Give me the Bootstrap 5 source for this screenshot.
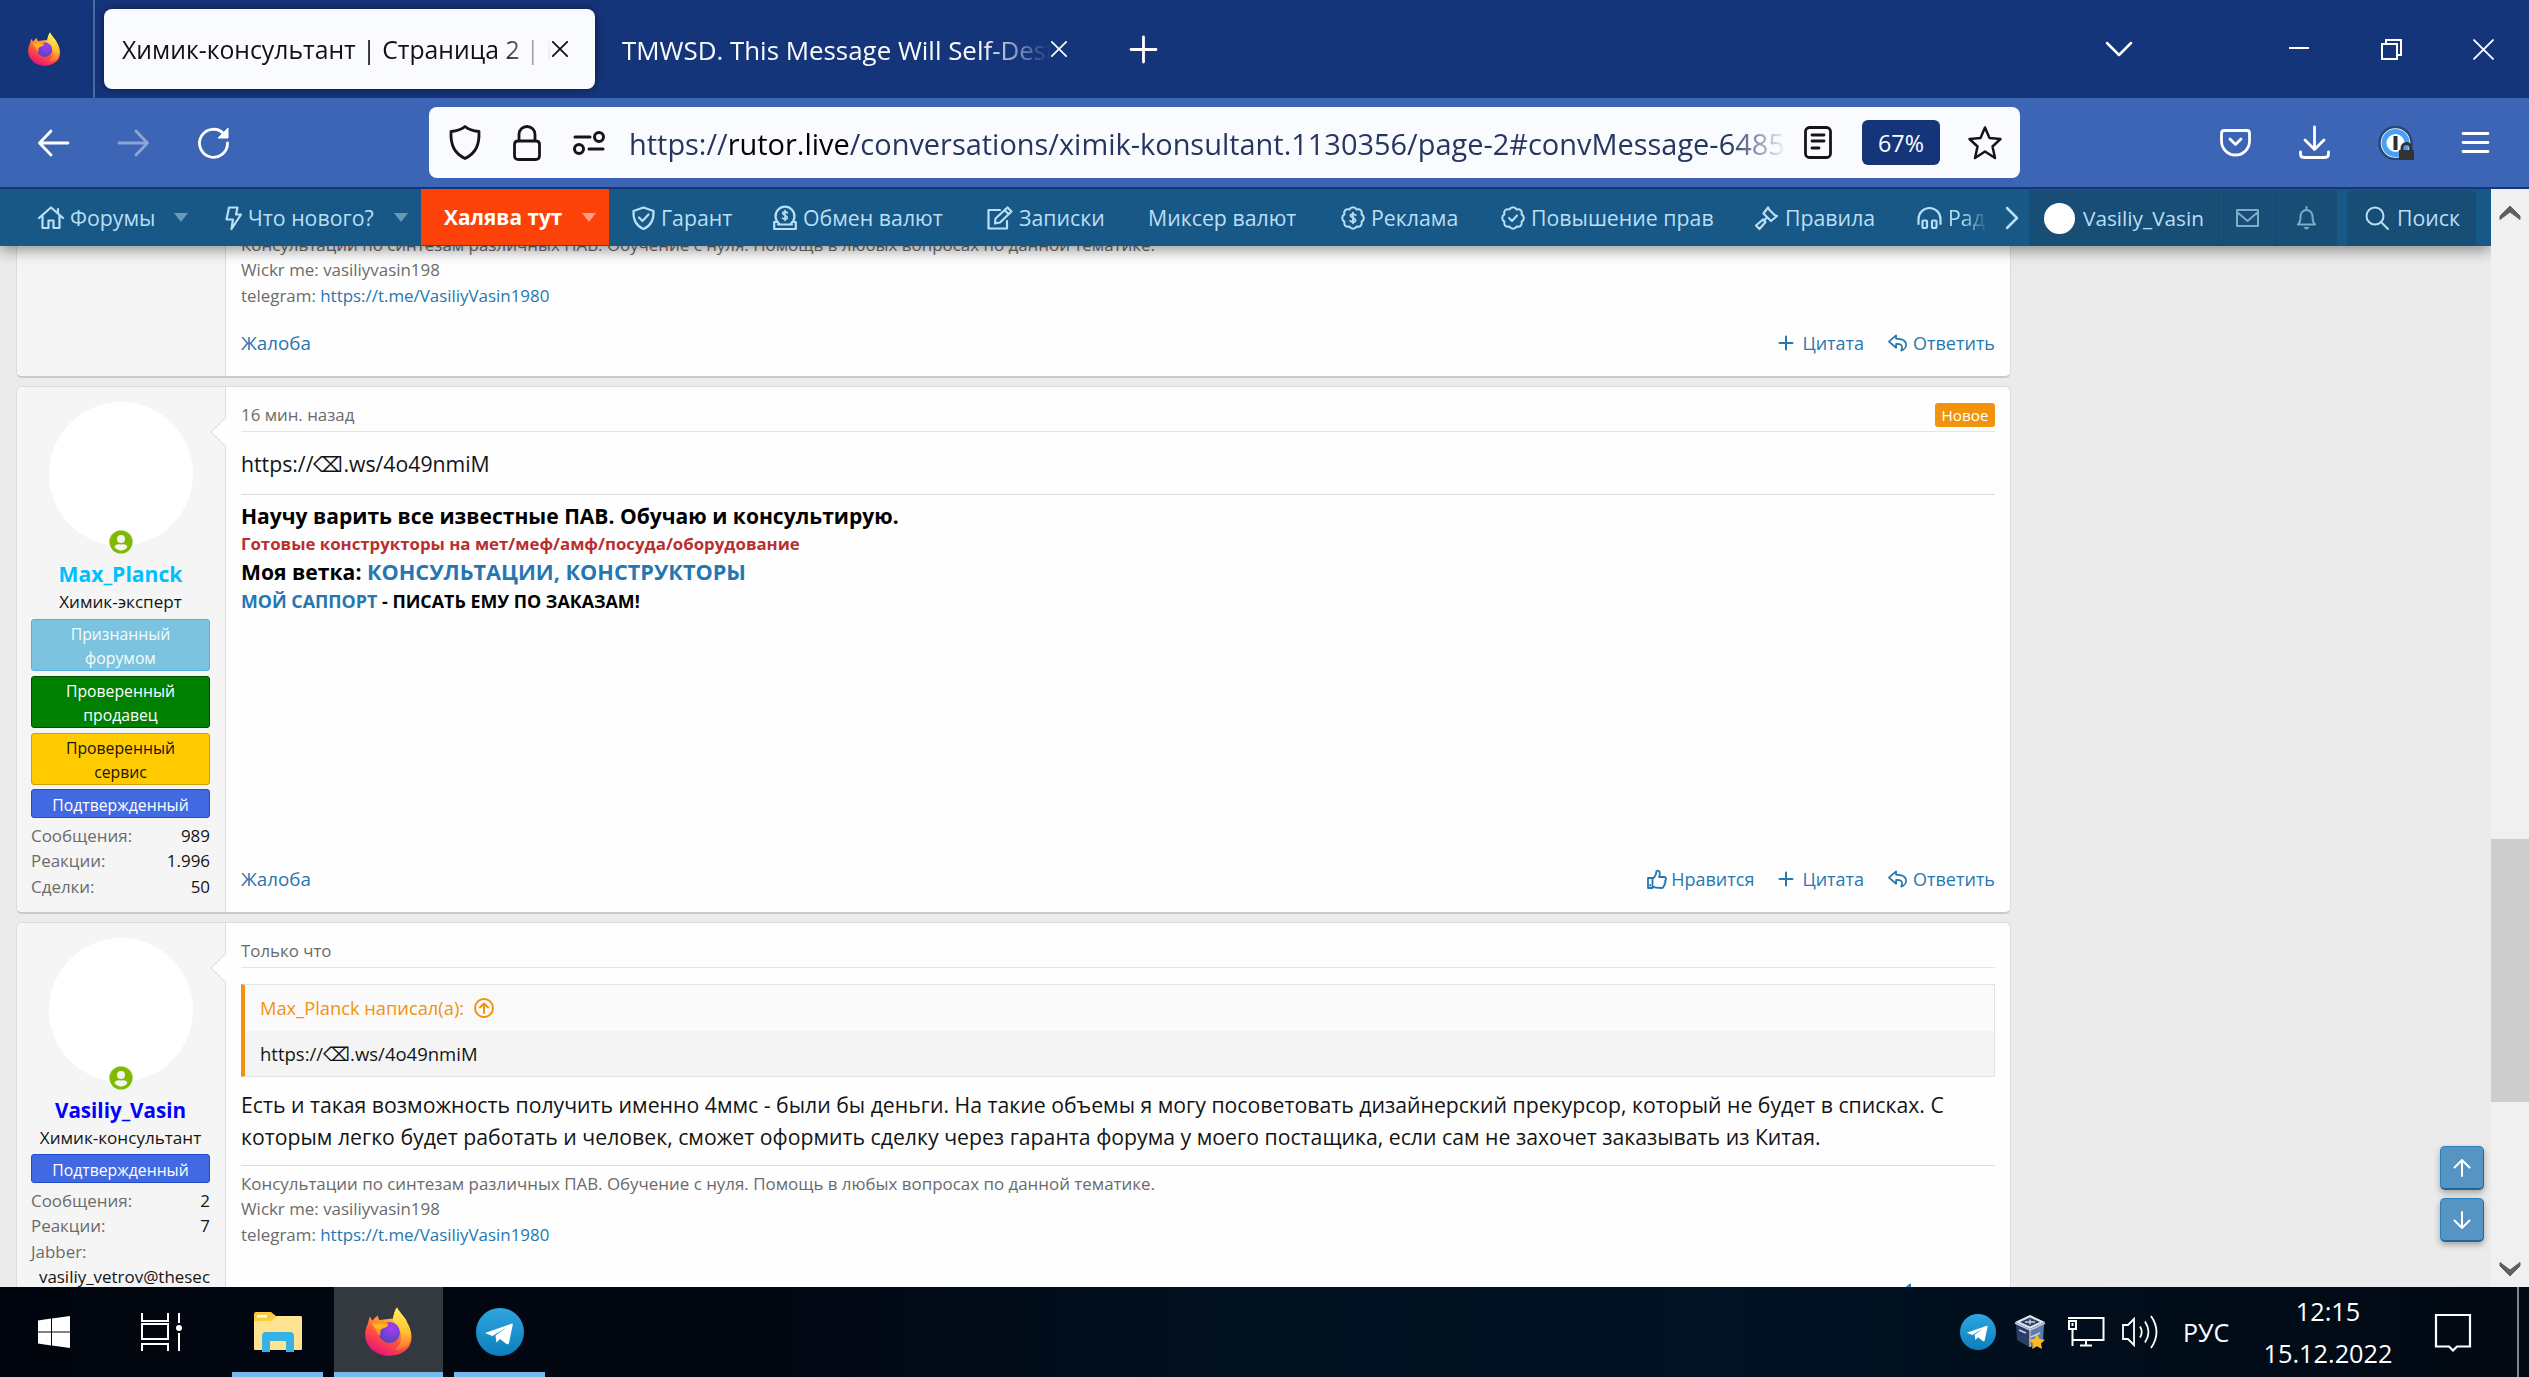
<!DOCTYPE html>
<html lang="ru">
<head>
<meta charset="utf-8">
<title>Химик-консультант | Страница 2</title>
<link href="https://cdn.jsdelivr.net/npm/bootstrap@5.3.0/dist/css/bootstrap.min.css" rel="stylesheet">
<style>
body{font-family:"Open Sans","Noto Sans",sans-serif;font-size:21.24px;line-height:32px;color:#141414;background:#ebebeb;height:1377px;width:2529px;overflow:hidden}
svg{display:block;flex:none;overflow:visible}
.ln{fill:none;stroke:currentColor;stroke-linecap:round;stroke-linejoin:round}
a{color:#2577b1;text-decoration:none}
.nw{white-space:nowrap}
/* tab strip */
.tabstrip{height:98px;background:#15357b;color:#fff;font-size:25.2px}
.fxview{width:95px;height:98px;border-right:2px solid #4d66a0;padding-left:28px}
.tab-on{width:491px;height:80px;margin-left:9px;border-radius:8px;background:#fafbff;color:#111;padding:0 26px 0 18px;box-shadow:0 0 8px rgba(0,0,0,.5)}
.tab-off{width:476px;height:80px;padding-left:27px;color:#fbfbfe;font-size:25.9px}
.tab-cap{width:429px;padding-top:2px;flex:none;overflow:hidden;white-space:nowrap;-webkit-mask-image:linear-gradient(90deg,#000 84%,transparent);mask-image:linear-gradient(90deg,#000 84%,transparent)}
.tab-on .tab-cap{width:430px;font-size:24.75px;-webkit-mask-image:linear-gradient(90deg,#000 88%,transparent);mask-image:linear-gradient(90deg,#000 88%,transparent)}
.m-plus{margin-left:59px}
.winbtns{padding-right:35px}
.g-a{margin-right:157px}.g-b{margin-right:72px}.g-c{margin-right:71px}
/* toolbar */
.toolbar{height:91px;background:#3d65b5;color:#fff;border-bottom:2px solid #15357b;padding-left:38px}
.tb-left{gap:49px;width:391px}
.urlbox{width:1591px;height:71px;border-radius:8px;background:#fafbff;color:#15141a;padding:0 18px 0 20px}
.i-lock{margin-left:32px}.i-perm{margin-left:32px}
.urltext{font-size:28.95px;width:1158px;margin-left:24px;padding-top:2px;overflow:hidden;white-space:nowrap;color:#26365f;line-height:50px;-webkit-mask-image:linear-gradient(90deg,#000 95%,transparent);mask-image:linear-gradient(90deg,#000 95%,transparent)}
.urltext b{font-weight:400;color:#000}
.zoomlvl{width:78px;height:45px;border-radius:6px;background:#15357b;color:#fff;font-size:23.3px;margin:0 28px 0 30px}
.tb-right{margin-left:200px}
/* site nav */
.sitenav{height:57px;background:#185886;color:#b9dff6;font-size:21.3px;z-index:3;position:relative;box-shadow:0 4px 14px rgba(0,0,0,.42)}
.sitenav .nav-item{white-space:nowrap;height:57px;display:flex;align-items:center;flex:none}
.n1{width:187px;margin-left:38px}.n2{width:196px}.n3{width:141px;margin-left:23px}.n4{width:214px}.n5{width:161px}.n6{width:193px}.n7{width:160px}.n8{width:254px}.n9{width:162px}.n10{width:88px}
.n1 .tri{margin-right:37px}.n2 .tri{margin-right:13px}.hot .tri{margin-right:13px}
.ic{width:26px;height:26px}.i6{margin-right:6px}
.tri{width:0;height:0;border:7px solid transparent;border-top:9px solid #6799b9;border-bottom:0;margin-left:auto}
.hot{background:#fc4209;color:#fff;font-weight:700;font-size:20.85px;width:188px;padding-left:23px;height:56px!important;align-self:flex-start}
.hot .tri{border-top-color:#fd9e80}
.fadeout{width:40px;overflow:hidden;-webkit-mask-image:linear-gradient(90deg,#000 35%,transparent);mask-image:linear-gradient(90deg,#000 35%,transparent)}
.dark-cell{background:#184d76;height:56px;margin-top:1px}
.dim{color:#7eabc8}
.ava-s{width:31px;height:31px;border-radius:50%;background:#fff}
.u1{width:190px;padding-left:15px;margin-left:10px;border-right:1px solid #16466b}.u2{width:57px;border-right:1px solid #16466b}.u3{width:61px}.u4{width:129px;margin-left:10px;padding-left:18px;border-radius:6px 6px 0 0}
.u-nick{font-size:20.8px}
/* page */
.pagearea{width:2491px}
.postlist{padding-left:16px;width:2011px;gap:8px}
.post{border:1px solid #dcdcdc;border-bottom:2px solid #cacaca;border-radius:6px;background:#fefefe;flex:none}
.p1{height:152px;margin-top:-20px}.p2{height:528px}.p3{height:560px}
.usercell{width:209px;flex:none;background:#f5f5f5;border-right:1px solid #dcdcdc;padding:15px 15px 15px 14px;border-radius:6px 0 0 6px;position:relative}
.notch::after{content:"";position:absolute;right:-12px;top:34px;width:22px;height:22px;background:#fefefe;border:solid #dcdcdc;border-width:0 0 1.5px 1.5px;transform:rotate(45deg)}
.ava{width:144px;height:144px;border-radius:50%;background:#fff;position:relative;margin:0 auto}
.online{position:absolute;left:59px;bottom:-9px}
.uname{font-weight:700;font-size:21.15px;line-height:30px;margin-top:13px}
.c-planck{color:#00bfff}.c-vasin{color:#00f;font-size:20.6px}
.utitle{font-size:17.1px;line-height:26px;margin-bottom:4px}
.ubanner{font-size:15.75px;line-height:24px;border:1px solid;border-radius:3px;padding:2px 24px 0;text-align:center;margin-bottom:5px}
.ub1{background:#7cc3e0;border-color:#57addb;color:#f6fbfd}
.ub2{background:#008000;border-color:#004d00;color:#fff}
.ub3{background:#ffcb00;border-color:#cca300;color:#141414}
.ub4{background:#4169e1;border-color:#214cce;color:#fff;padding:3px 0 0;margin-top:-1px}
.ustats{font-size:16.95px;line-height:25.4px}
.ustats span{color:#6b6b6b}
.cell{padding:0 15px 0 15px}
.phead{height:45px;padding-top:15px;font-size:16.85px;line-height:26px;color:#6b6b6b;border-bottom:1px solid #e3e3e3;margin-bottom:16px}
.newtag{background:#f2930d;color:#fff;font-size:15.3px;border-radius:3px;width:60px;height:24px;line-height:25px;margin-top:1px}
.sig{border-top:1px solid #dcdcdc}
.sig-s{font-size:16.92px;line-height:25.4px;color:#6b6b6b;padding-top:5px}
.sig-b{font-weight:700;color:#000;line-height:28.2px;margin-top:14px;padding-top:7px}
.p3 .sig-s{margin-top:12px}
.s1{font-size:21.06px}.s2{font-size:16.82px;color:#b92f2f}.s3{font-size:21.15px}.s3 a{font-size:21.7px}.s4{font-size:17.85px}
.pfoot{font-size:18px;line-height:26px;color:#2577b1;padding-bottom:4px}
.report{font-size:18.8px}
.p3 .pfoot{margin-top:36px}
.quote{border:1px solid #e3e3e3;border-left:4px solid #f2930d;height:93px;margin-bottom:12px}
.q-h{background:#fafafa;color:#f2930d;height:46px;font-size:18.3px;padding-left:15px;gap:10px}
.q-b{background:#f4f4f4;height:45px;font-size:18.5px;padding-left:15px}
.sbar{width:38px;background:#f0f0f0;padding:17px 0 11px}
.sthumb{background:#cdcdcd;height:263px;width:38px;margin-top:620px}
.jump{position:absolute;left:2440px;top:1146px;z-index:4}
.jbtn{width:44px;height:44px;border-radius:5px;background:#5694c3;border:1px solid #2a80bd;border-right-color:#20679a;border-bottom:2px solid #20679a;color:#fff;box-shadow:0 3px 6px rgba(0,0,0,.3);margin-bottom:8px}
/* taskbar */
.taskbar{height:90px;background:linear-gradient(90deg,#01050e 0,#020712 30%,#01101f 48%,#001223 68%,#010d1b 84%,#020912);color:#fff;z-index:5;position:relative}
.tkb{height:90px;width:91px;border-bottom:5px solid #76b9ed;padding-top:4px}
.tkb.act{width:109px;background:#343940;margin:0 11px}
.clock{width:140px;font-size:25.3px;line-height:42px;margin-left:29px}
.lang{font-size:25px;margin-left:25px;width:46px}
.k1{margin-left:38px}.k2{margin-left:71px}.k3{margin-left:50px}.t1{margin-left:1415px}.t2{margin-left:19px}.t3{margin-left:23px}.t4{margin-left:17px}.t5{margin-left:37px}.t6{margin-left:46px;width:2px;height:90px;background:#7e858e}
</style>
<script src="https://cdn.jsdelivr.net/npm/bootstrap@5.3.0/dist/js/bootstrap.bundle.min.js"></script>
</head>
<body class="d-flex flex-column m-0">
<svg width="0" height="0" class="position-absolute">
<defs>
<linearGradient id="fa" x1=".8" y1="0" x2=".3" y2="1"><stop offset="0" stop-color="#fff44f"/><stop offset=".35" stop-color="#ffa930"/><stop offset=".65" stop-color="#ff4f3e"/><stop offset="1" stop-color="#e60f7e"/></linearGradient>
<linearGradient id="fb" x1=".5" y1="0" x2=".5" y2="1"><stop offset="0" stop-color="#fff261"/><stop offset=".6" stop-color="#ffc02e"/><stop offset="1" stop-color="#ff6a3a"/></linearGradient>
<radialGradient id="fc" cx=".6" cy=".3" r=".8"><stop offset="0" stop-color="#a63df5"/><stop offset="1" stop-color="#4a45b8"/></radialGradient>
<linearGradient id="tg" x1="0" y1="0" x2="0" y2="1"><stop offset="0" stop-color="#2fa6e0"/><stop offset="1" stop-color="#0b7fbd"/></linearGradient>
<symbol id="firefox" viewBox="0 0 48 48">
<path d="M5 9c1 2 1.500 3 2.500 4C9 11 11 9.500 13 8c0 2 .5 3.500 1.500 4.500L28 11C29 6 30 2.500 32 0c2 5 8 9 10 15 6 10 7 22-3 29-9 6-22 6-31-1C-2 34-1 23 3 16c.5-3 1-5 2-7z" fill="url(#fa)"/>
<path d="M28 11C29 6 30 2.500 32 0c2 5 8 9 10 15 5 8 5 17 0 23-3 3-8 5-12 4 6-4 8-12 5-19-2-4-6-6-7-12z" fill="url(#fb)"/>
<circle cx="24.500" cy="25" r="10.500" fill="url(#fc)"/>
<path d="M14.500 12.500c3 0 7 1.500 9 4.500-1.500 3-4 3.500-7 4.500-1 2-2 4-1 7-3-2-5-5-5-9 0-3 2-5 4-7z" fill="#ff9a1f"/>
<path d="M7 15c3 2 9 1 16 3-3 2-6 2-8 4l-5-1z" fill="#ffb52a"/>
</symbol>
<symbol id="telegram" viewBox="0 0 48 48"><circle cx="24" cy="24" r="24" fill="url(#tg)"/><path d="M9 25 36 15.500q1 0 .8 1L33 35q-.8 2-2.500.9L24 31l-3.500 3.500-1-7L31 19 16.500 28z" fill="#fff"/></symbol>
<symbol id="x" viewBox="0 0 20 20"><path class="ln" stroke-linecap="butt" d="M1 1 19 19M19 1 1 19"/></symbol>
<symbol id="plus" viewBox="0 0 16 16"><path class="ln" stroke-width="2" d="M8 1.500v13M1.500 8h13"/></symbol>
<symbol id="reply" viewBox="0 0 22 18"><path class="ln" stroke-width="1.800" d="M8.500 1 1 7.500 8.500 14v-4c5 0 7.500 1 5.500 7 6-2 9-12-5.500-12.500z"/></symbol>
<symbol id="like" viewBox="0 0 20 20"><path class="ln" stroke-width="1.800" d="M1 9h4.500v10H1zM5.500 10c2-2 4-3.500 4-8 3.500-1.500 4 2.500 2.500 6h5c2.500 0 2.500 3 1 3.500 1 1 .5 2.500-.5 3 .5 1.200 0 2.200-1 2.500.2 1.500-.5 2-2 2-4 0-6 0-9-1.500M3.200 16v.5"/></symbol>
<symbol id="online" viewBox="0 0 26 26"><circle cx="13" cy="13" r="13" fill="#f5f5f5"/><circle cx="13" cy="13" r="11.500" fill="#7fb900"/><circle cx="13" cy="10" r="4" fill="#f5f5f5"/><path d="M6.500 18c1-3 3.500-3 6.500-2.500 3-.5 5.500-.5 6.500 2.500-3 4.500-10 4.500-13 0z" fill="#f5f5f5"/></symbol>
<symbol id="rosette" viewBox="0 0 24 24"><path class="ln" stroke-width="2" d="M12 1.200q2.400 0 3.600 2.200 2.700-.6 4.200.8t.8 4.200q2.200 1.200 2.200 3.600t-2.200 3.600q.7 2.800-.8 4.200t-4.200.8q-1.200 2.200-3.600 2.200t-3.600-2.200q-2.700.6-4.200-.8t-.8-4.200Q1.200 14.400 1.200 12t2.200-3.600q-.7-2.800.8-4.200t4.200-.8Q9.600 1.200 12 1.200z"/></symbol>
<symbol id="dollar" viewBox="0 0 8 14"><path class="ln" stroke-width="1.900" d="M7 4C6 2.500 1.500 2 1.300 4.500 1.300 7 6.800 6.500 6.800 9.500 6.500 12 2 11.500 1 10M4 1v12"/></symbol>
</defs></svg>

<header class="tabstrip d-flex align-items-center flex-shrink-0">
  <div class="fxview d-flex align-items-center"><svg width="33" height="34"><use href="#firefox"/></svg></div>
  <div class="tab-on d-flex align-items-center"><div class="tab-cap">Химик-консультант | Страница 2 | R</div><svg width="16" height="16" stroke-width="2.200"><use href="#x"/></svg></div>
  <div class="tab-off d-flex align-items-center"><div class="tab-cap">TMWSD. This Message Will Self-Dest</div><svg width="16" height="16" stroke-width="2.200"><use href="#x"/></svg></div>
  <svg class="m-plus" width="27" height="27" viewBox="0 0 27 27"><path class="ln" stroke-width="2.800" d="M13.500 1v25M1 13.500h25"/></svg>
  <div class="winbtns d-flex align-items-center ms-auto">
    <svg class="g-a" width="26" height="14" viewBox="0 0 26 14"><path class="ln" stroke-width="2.500" d="M1 1l12 12L25 1"/></svg>
    <svg class="g-b" width="20" height="20" viewBox="0 0 20 20"><path d="M0 8h20v2H0z" fill="#fff"/></svg>
    <svg class="g-c" width="21" height="21" viewBox="0 0 21 21"><path fill="none" stroke="#fff" stroke-width="2" d="M1 5h15v15H1zM5 5V1h15v15h-4"/></svg>
    <svg width="21" height="21" stroke-width="1.800"><use href="#x"/></svg>
  </div>
</header>

<div class="toolbar d-flex align-items-center flex-shrink-0">
  <div class="tb-left d-flex align-items-center">
    <svg width="31" height="26" viewBox="0 0 31 26"><path class="ln" stroke-width="2.800" d="M13 1 1.500 13 13 25M2 13h28"/></svg>
    <svg width="31" height="26" viewBox="0 0 31 26" opacity=".42"><path class="ln" stroke-width="2.800" d="M18 1l11.500 12L18 25M29 13H1"/></svg>
    <svg width="31" height="31" viewBox="0 0 31 31"><path class="ln" stroke-width="2.800" d="M26 7A14 14 0 1 0 29.500 16"/><path fill="#fff" d="M30 1v10H20z" stroke="#fff" stroke-linejoin="round"/></svg>
  </div>
  <div class="urlbox d-flex align-items-center">
    <svg width="32" height="35" viewBox="0 0 32 35"><path class="ln" stroke-width="2.800" d="M16 1.500C12 5 7 6 2 6.500 1.500 20 5 28 16 33.500 27 28 30.500 20 30 6.500 25 6 20 5 16 1.500z"/></svg>
    <svg class="i-lock" width="28" height="36" viewBox="0 0 28 36"><path class="ln" stroke-width="2.800" d="M5 16h18q3.500 0 3.500 3.500v11q0 4-4 4h-17q-4 0-4-4v-11Q1.500 16 5 16zM6 16v-6.500a8 8 0 0 1 16 0V16"/></svg>
    <svg class="i-perm" width="32" height="24" viewBox="0 0 32 24"><path class="ln" stroke-width="3" d="M2 6h15M16 18h14"/><circle class="ln" stroke-width="3" cx="26" cy="6" r="4.500"/><circle class="ln" stroke-width="3" cx="6" cy="18" r="4.500"/></svg>
    <div class="urltext">https://<b>rutor.live</b>/conversations/ximik-konsultant.1130356/page-2#convMessage-6485</div>
    <svg class="ms-auto" width="28" height="33" viewBox="0 0 28 33"><rect class="ln" stroke-width="2.800" x="1.500" y="1.500" width="25" height="30" rx="4"/><path class="ln" stroke-width="2.800" d="M8 9h12M8 15h12M8 22h7"/></svg>
    <div class="zoomlvl d-flex align-items-center justify-content-center">67%</div>
    <svg width="34" height="34" viewBox="0 0 34 34"><path class="ln" stroke-width="2.500" d="M17 1.500l4.500 10.500 11 1-8 7.500 2.500 11.500-10-6.500L7 32l2.500-11.500-8-7.500 11-1z"/></svg>
  </div>
  <div class="tb-right d-flex align-items-center">
    <svg width="31" height="28" viewBox="0 0 31 28"><path class="ln" stroke-width="2.800" d="M4 1.500h23q2.500 0 2.500 3V12a14 14 0 0 1-28 0V4.500q0-3 2.500-3zM10 10l5.500 5.500L21 10"/></svg>
    <svg class="ms-5" width="31" height="33" viewBox="0 0 31 33"><path class="ln" stroke-width="2.800" d="M15.500 1v22M6 14l9.500 9.500L25 14M1.500 26v2q0 3.500 3.500 3.500h21q3.500 0 3.500-3.500v-2"/></svg>
    <svg class="ms-5" width="36" height="36" viewBox="0 0 36 36"><circle cx="17.500" cy="18" r="16" fill="#fff" stroke="#274777" stroke-width="2.500"/><circle cx="17.500" cy="18" r="11.500" fill="none" stroke="#4aa0f5" stroke-width="5"/><path d="M15.500 11h4v14h-4z" fill="#2c2f3b"/><path d="M21 25h15v10H21z" fill="#333"/><path fill="none" stroke="#333" stroke-width="3" d="M24 26v-3a4.500 4.500 0 0 1 9 0v3"/></svg>
    <svg class="ms-5" width="27" height="21" viewBox="0 0 27 21"><path class="ln" stroke-width="2.800" d="M1 1.500h25M1 10.500h25M1 19.500h25"/></svg>
  </div>
</div>

<div class="d-flex flex-grow-1 overflow-hidden">
 <div class="pagearea d-flex flex-column overflow-hidden">
  <nav class="sitenav d-flex align-items-center flex-shrink-0">
    <div class="nav-item n1"><svg class="ic i6" viewBox="0 0 26 24"><path class="ln" stroke-width="2.200" d="M1 12 13 1.500 25 12M4.500 9.500V22h6v-7.500h5V22h6V9.500M20 7V3"/></svg>Форумы<i class="tri"></i></div>
    <div class="nav-item n2"><svg class="i6" width="17" height="24" viewBox="0 0 17 24"><path class="ln" stroke-width="2.200" d="M4 1.500h8.500L11 8.500h5L6.500 23 8 13.500H1.500z"/></svg>Что нового?<i class="tri"></i></div>
    <div class="nav-item hot">Халява тут<i class="tri"></i></div>
    <div class="nav-item n3"><svg class="i6" width="23" height="24" viewBox="0 0 23 24"><path class="ln" stroke-width="2.200" d="M11.500 1.500 21.500 5c.5 8-2 14.500-10 18-8-3.500-10.500-10-10-18zM7 11.500l3.500 3.500L16.500 8.500"/></svg>Гарант</div>
    <div class="nav-item n4"><svg class="i6" width="24" height="24" viewBox="0 0 24 24"><path class="ln" stroke-width="2.200" d="M6 17.500a9.500 9.500 0 1 1 12 0M4 16H1.200v7h21.600v-7H20M5 18.500h14"/><use href="#dollar" x="8.500" y="3.500" width="7" height="12"/></svg>Обмен валют</div>
    <div class="nav-item n5"><svg class="i6" width="26" height="24" viewBox="0 0 26 24"><path class="ln" stroke-width="2.200" d="M13 4H1.500v18.500H20V15M8.500 12.500 20.500 1.500 24.500 5.500 13 16.500l-5 1zM17.500 4l4 4"/></svg>Записки</div>
    <div class="nav-item n6">Миксер валют</div>
    <div class="nav-item n7"><svg class="i6" width="24" height="24"><use href="#rosette"/><use href="#dollar" x="8" y="5.500" width="8" height="13"/></svg>Реклама</div>
    <div class="nav-item n8"><svg class="i6" width="24" height="24" viewBox="0 0 24 24"><use href="#rosette"/><path class="ln" stroke-width="2" d="M8 12l3 3 5-5.500"/></svg>Повышение прав</div>
    <div class="nav-item n9"><svg class="i6" width="24" height="24" viewBox="0 0 24 24"><path class="ln" stroke-width="2.200" d="M13 1.500l-4.500 6L16 15l6-5-2.500-1-5-5zM12 11.500l-2.500 2.500M8 13.500l2.500 2.500-6 7-3.500-3.500z"/></svg>Правила</div>
    <div class="nav-item n10"><svg class="i6" width="25" height="24" viewBox="0 0 25 24"><path class="ln" stroke-width="2.200" d="M1.500 18v-5a11 11 0 0 1 22 0v5"/><rect class="ln" stroke-width="2.200" x="5.500" y="14.500" width="4.500" height="7.500" rx="1"/><rect class="ln" stroke-width="2.200" x="15" y="14.500" width="4.500" height="7.500" rx="1"/></svg><span class="fadeout">Ради</span></div>
    <svg width="14" height="22" viewBox="0 0 14 22"><path class="ln" stroke-width="2.500" d="M2 1l10 10L2 21"/></svg>
    <div class="dark-cell u1 d-flex align-items-center flex-shrink-0"><i class="ava-s me-2 flex-shrink-0"></i><span class="nw u-nick">Vasiliy_Vasin</span></div>
    <div class="dark-cell u2 dim d-flex align-items-center justify-content-center flex-shrink-0"><svg width="23" height="18" viewBox="0 0 23 18"><path class="ln" stroke-width="2" d="M1 1h21v16H1zM1 3l10.500 9L22 3"/></svg></div>
    <div class="dark-cell u3 dim d-flex align-items-center justify-content-center flex-shrink-0"><svg width="21" height="24" viewBox="0 0 21 24"><path class="ln" stroke-width="2" d="M10.500 1v2M2 18.500h17c-2-2-2.500-4-2.500-8a6 6.500 0 0 0-12 0c0 4-.5 6-2.500 8z"/><path fill="currentColor" d="M7.500 21h6q-3 5-6 0z"/></svg></div>
    <div class="dark-cell u4 d-flex align-items-center flex-shrink-0"><svg width="24" height="24" viewBox="0 0 24 24" class="me-2"><circle class="ln" stroke-width="2" cx="10" cy="10" r="8.500"/><path class="ln" stroke-width="2" d="M16 16l7 7"/></svg>Поиск</div>
  </nav>

  <main class="postlist d-flex flex-column">
    <article class="post p1 d-flex">
      <div class="usercell"></div>
      <div class="cell flex-grow-1 d-flex flex-column">
        <div class="sig-s">Консультации по синтезам различных ПАВ. Обучение с нуля. Помощь в любых вопросах по данной тематике.<br>Wickr me: vasiliyvasin198<br>telegram: <a href="#">https://t.me/VasiliyVasin1980</a></div>
        <div class="pfoot d-flex align-items-center mt-auto mb-3"><span class="me-auto report">Жалоба</span>
          <svg width="16" height="16" class="me-2"><use href="#plus"/></svg><span class="me-4">Цитата</span><svg width="21" height="18" class="me-1"><use href="#reply"/></svg><span>Ответить</span></div>
      </div>
    </article>

    <article class="post p2 d-flex">
      <div class="usercell notch text-center">
        <div class="ava"><svg class="online" width="26" height="26"><use href="#online"/></svg></div>
        <div class="uname c-planck">Max_Planck</div>
        <div class="utitle">Химик-эксперт</div>
        <div class="ubanner ub1">Признанный форумом</div>
        <div class="ubanner ub2">Проверенный продавец</div>
        <div class="ubanner ub3">Проверенный сервис</div>
        <div class="ubanner ub4">Подтвержденный</div>
        <div class="ustats">
          <div class="d-flex justify-content-between"><span>Сообщения:</span>989</div>
          <div class="d-flex justify-content-between"><span>Реакции:</span>1.996</div>
          <div class="d-flex justify-content-between"><span>Сделки:</span>50</div>
        </div>
      </div>
      <div class="cell flex-grow-1 d-flex flex-column">
        <div class="phead d-flex justify-content-between"><span>16 мин. назад</span><span class="newtag text-center">Новое</span></div>
        <div>https://⌫.ws/4o49nmiM</div>
        <div class="sig sig-b">
          <div class="s1">Научу варить все известные ПАВ. Обучаю и консультирую.</div>
          <div class="s2">Готовые конструкторы на мет/меф/амф/посуда/оборудование</div>
          <div class="s3">Моя ветка: <a href="#">КОНСУЛЬТАЦИИ, КОНСТРУКТОРЫ</a></div>
          <div class="s4"><a href="#">МОЙ САППОРТ</a> - ПИСАТЬ ЕМУ ПО ЗАКАЗАМ!</div>
        </div>
        <div class="pfoot d-flex align-items-center mt-auto mb-3"><span class="me-auto report">Жалоба</span>
          <svg width="20" height="20" class="me-1"><use href="#like"/></svg><span class="me-4">Нравится</span><svg width="16" height="16" class="me-2"><use href="#plus"/></svg><span class="me-4">Цитата</span><svg width="21" height="18" class="me-1"><use href="#reply"/></svg><span>Ответить</span></div>
      </div>
    </article>

    <article class="post p3 d-flex">
      <div class="usercell notch text-center">
        <div class="ava"><svg class="online" width="26" height="26"><use href="#online"/></svg></div>
        <div class="uname c-vasin">Vasiliy_Vasin</div>
        <div class="utitle">Химик-консультант</div>
        <div class="ubanner ub4">Подтвержденный</div>
        <div class="ustats">
          <div class="d-flex justify-content-between"><span>Сообщения:</span>2</div>
          <div class="d-flex justify-content-between"><span>Реакции:</span>7</div>
          <div class="text-start"><span>Jabber:</span></div>
          <div class="text-end">vasiliy_vetrov@thesec</div>
        </div>
      </div>
      <div class="cell flex-grow-1 d-flex flex-column">
        <div class="phead"><span>Только что</span></div>
        <div class="quote">
          <div class="q-h d-flex align-items-center">Max_Planck написал(а):<svg width="20" height="20" viewBox="0 0 20 20"><circle class="ln" stroke-width="2" cx="10" cy="10" r="9"/><path class="ln" stroke-width="2" d="M10 15V6M6 9.500 10 5.500l4 4"/></svg></div>
          <div class="q-b d-flex align-items-center">https://⌫.ws/4o49nmiM</div>
        </div>
        <div class="nw">Есть и такая возможность получить именно 4ммс - были бы деньги. На такие объемы я могу посоветовать дизайнерский прекурсор, который не будет в списках. С<br>которым легко будет работать и человек, сможет оформить сделку через гаранта форума у моего постащика, если сам не захочет заказывать из Китая.</div>
        <div class="sig sig-s">Консультации по синтезам различных ПАВ. Обучение с нуля. Помощь в любых вопросах по данной тематике.<br>Wickr me: vasiliyvasin198<br>telegram: <a href="#">https://t.me/VasiliyVasin1980</a></div>
        <div class="pfoot d-flex align-items-center justify-content-end"><svg width="21" height="18"><use href="#reply"/></svg><span class="pe-5 me-4"></span></div>
      </div>
    </article>
  </main>
 </div>
 <div class="sbar d-flex flex-column align-items-center">
   <svg width="20" height="13" viewBox="0 0 20 13"><path d="M0 10 10 0 20 10v3.500L10 6 0 13.500z" fill="#606060" stroke="#606060"/></svg>
   <div class="sthumb"></div>
   <svg class="mt-auto" width="20" height="13" viewBox="0 0 20 13"><path d="M0 3 10 13 20 3V-.5L10 7 0-.5z" fill="#606060" stroke="#606060"/></svg>
 </div>
</div>
<div class="jump">
  <div class="jbtn d-flex align-items-center justify-content-center"><svg width="18" height="18" viewBox="0 0 18 18"><path class="ln" stroke-width="2" d="M9 17V1M1.500 8.500 9 1l7.500 7.500"/></svg></div>
  <div class="jbtn d-flex align-items-center justify-content-center"><svg width="18" height="18" viewBox="0 0 18 18"><path class="ln" stroke-width="2" d="M9 1v16M1.500 9.500 9 17l7.500-7.500"/></svg></div>
</div>

<footer class="taskbar d-flex align-items-center flex-shrink-0">
  <svg class="k1" width="32" height="32" viewBox="0 0 32 32"><path fill="#fff" d="M0 4.500 13 2.600V15.500H0zM14 2.400 32 0v15.500H14zM0 16.500h13v13L0 27.500zM14 16.500h18V32l-18-2.400z"/></svg>
  <svg class="k2" width="41" height="38" viewBox="0 0 41 38"><path fill="none" stroke="#fff" stroke-width="2" d="M1 0v8h26V0M1 11h26v15H1zM1 38v-7h26v7M38 0v10M38 20v18"/><circle cx="38" cy="15" r="3" fill="#fff"/></svg>
  <div class="tkb k3 d-flex align-items-center justify-content-center"><svg width="48" height="40" viewBox="0 0 48 40"><path fill="#ffc93c" d="M0 2q0-2 2-2h15l5 4h24q2 0 2 2v10H0z"/><path fill="#ffe391" d="M0 9h17l6-5h23q2 0 2 2v31q0 1-1 1H1q-1 0-1-1z"/><path fill="#fff" d="M3 3h10v2.500H3z"/><path fill="#35b3e9" d="M8 40V24q0-4 4-4h24q4 0 4 4v16h-8V29H16v11z"/></svg></div>
  <div class="tkb act d-flex align-items-center justify-content-center"><svg width="48" height="49"><use href="#firefox"/></svg></div>
  <div class="tkb d-flex align-items-center justify-content-center"><svg width="48" height="48"><use href="#telegram"/></svg></div>
  <svg class="t1" width="36" height="36"><use href="#telegram"/></svg>
  <svg class="t2" width="30" height="35" viewBox="0 0 30 35"><path fill="#dfe6ef" d="M15 0 30 7 15 14 0 7z"/><path fill="#2b3f66" d="M15 2.500 25 7 15 11.500 5 7zM1 9l13 6v17L2 25z"/><path fill="#5c7cae" d="M16 15l13-6-1 16-12 7z"/><path stroke="#c5d3e6" stroke-width="1.500" fill="none" d="M10 7h10M15 4.500v5M4 15l7 3M16 22l9-4M15 14v18M0 8l15 7 15-7"/><path fill="#ffb91f" d="M22 19l2.600 5 5.400.8-4 3.700 1 5.500-5-2.700-5 2.700 1-5.500-4-3.700 5.400-.8z"/></svg>
  <svg class="t3" width="37" height="30" viewBox="0 0 37 30"><path fill="none" stroke="#fff" stroke-width="2" d="M0 1h35.500v22H5M4.500 13v16M1 4h7v8H1zM4.500 6v3M18 23v5M12 28.500h12"/></svg>
  <svg class="t4" width="36" height="34" viewBox="0 0 36 34"><path fill="none" stroke="#fff" stroke-width="1.800" d="M1 10h5l6-6v26l-6-6H1zM18 11.500q3.500 5.500 0 11M23 6.500q7 10.500 0 21M29 1q11 16 0 32"/></svg>
  <div class="lang">РУС</div>
  <div class="clock text-center"><div>12:15</div><div>15.12.2022</div></div>
  <svg class="t5" width="36" height="37" viewBox="0 0 36 37"><path fill="none" stroke="#fff" stroke-width="2.200" d="M1 1h34v31.500H22L18 36.500 14 32.500H1z"/></svg>
  <div class="t6"></div>
</footer>
</body>
</html>
